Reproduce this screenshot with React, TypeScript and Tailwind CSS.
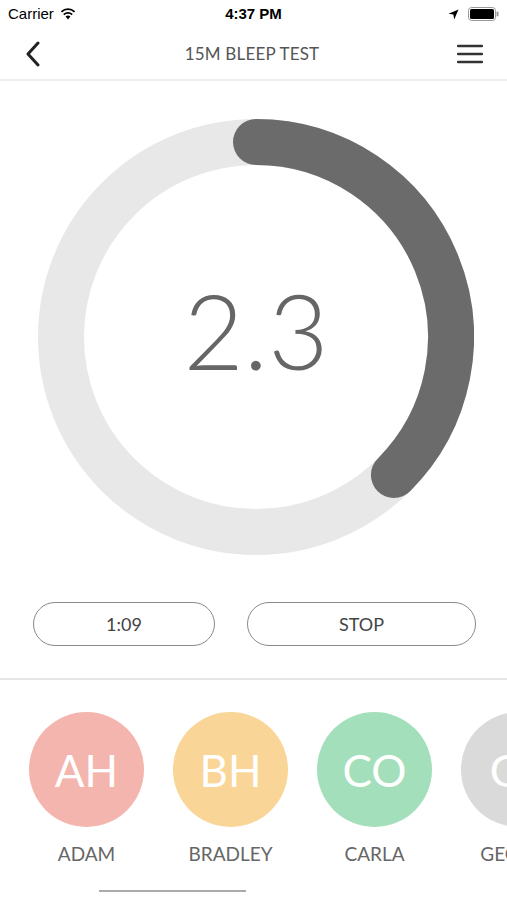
import React from "react";

const people = [
  { initials: "AH", name: "ADAM", color: "bg-[#f4b5ae]" },
  { initials: "BH", name: "BRADLEY", color: "bg-[#f9d597]" },
  { initials: "CO", name: "CARLA", color: "bg-[#a4dfbb]" },
  { initials: "GE", name: "GEORGE", color: "bg-[#dadada]" },
];

const StatusBar = () => (
  <div className="flex h-[28px] items-center justify-between px-[8px] font-['Liberation_Sans',sans-serif] text-[15px] text-black">
    <div className="flex w-[120px] items-center gap-[6px]">
      <span>Carrier</span>
      <svg width="16" height="12" viewBox="0 0 16 12">
        <path d="M8 11.5 L5.6 8.6 A3.6 3.6 0 0 1 10.4 8.6 Z" fill="#000" />
        <path d="M3.8 6.6 A6.2 6.2 0 0 1 12.2 6.6" stroke="#000" strokeWidth="1.8" fill="none" />
        <path d="M1.4 3.8 A9.6 9.6 0 0 1 14.6 3.8" stroke="#000" strokeWidth="1.8" fill="none" />
      </svg>
    </div>
    <span className="font-bold">4:37 PM</span>
    <div className="flex w-[120px] items-center justify-end gap-[9px]">
      <svg width="11" height="11" viewBox="0 0 11 11">
        <path d="M10.5 0.5 L0.5 4.8 L5.4 5.6 L6.2 10.5 Z" fill="#000" />
      </svg>
      <svg width="31" height="14" viewBox="0 0 31 14">
        <rect x="0.5" y="0.5" width="27" height="13" rx="3" fill="none" stroke="#999" />
        <rect x="2" y="2" width="24" height="10" rx="1.5" fill="#000" />
        <rect x="28.5" y="4.5" width="2" height="5" rx="1" fill="#999" />
      </svg>
    </div>
  </div>
);

const NavBar = () => (
  <div className="flex h-[53px] items-center justify-between border-b-2 border-[#efefef] pl-[25px] pr-[24px]">
    <svg width="16" height="26" viewBox="0 0 16 26">
      <path d="M13 2 L3 13 L13 24" stroke="#222" strokeWidth="3" fill="none" strokeLinecap="round" strokeLinejoin="round" />
    </svg>
    <span className="pl-[6px] font-['Lato',sans-serif] text-[17px] tracking-[0.2px] text-[#555]">15M BLEEP TEST</span>
    <svg width="26" height="20" viewBox="0 0 26 20">
      <path d="M1 2 H25 M1 10 H25 M1 18 H25" stroke="#333" strokeWidth="2.5" strokeLinecap="round" />
    </svg>
  </div>
);

const Ring = () => (
  <div className="relative h-[436px] w-[436px]">
    <svg width="436" height="436" viewBox="0 0 436 436">
      <circle cx="218" cy="218" r="195" stroke="#e8e8e8" strokeWidth="46" fill="none" />
      <path d="M218 23 A195 195 0 0 1 355.9 355.9" stroke="#6b6b6b" strokeWidth="46" fill="none" strokeLinecap="round" />
    </svg>
    <div className="absolute inset-0 flex items-center justify-center pb-[14px] font-['Lato',sans-serif] text-[104px] font-light text-[#666]">
      2.3
    </div>
  </div>
);

export default function App() {
  return (
    <div className="h-[900px] w-[507px] overflow-hidden bg-white">
      <StatusBar />
      <NavBar />
      <div className="pl-[38px] pt-[38px]">
        <Ring />
      </div>
      <div className="mt-[47px] flex gap-[32px] pl-[33px] font-['Lato',sans-serif] text-[18px] text-[#444]">
        <button className="flex h-[44px] w-[182px] items-center justify-center rounded-full border-[1.5px] border-[#8a8a8a]">
          1:09
        </button>
        <button className="flex h-[44px] w-[229px] items-center justify-center rounded-full border-[1.5px] border-[#8a8a8a]">
          STOP
        </button>
      </div>
      <div className="mt-[32px] h-[2px] bg-[#e6e6e6]" />
      <div className="flex gap-[29px] overflow-hidden pl-[29px] pt-[32px] font-['Lato',sans-serif]">
        {people.map((p) => (
          <div key={p.name} className="flex w-[115px] shrink-0 flex-col items-center">
            <div className={`flex h-[115px] w-[115px] items-center justify-center rounded-full ${p.color} text-[44px] text-white`}>
              {p.initials}
            </div>
            <span className="mt-[13px] whitespace-nowrap text-[19px] text-[#666]">{p.name}</span>
          </div>
        ))}
      </div>
      <div className="ml-[99px] mt-[21px] h-[2px] w-[147px] bg-[#aaa]" />
    </div>
  );
}
